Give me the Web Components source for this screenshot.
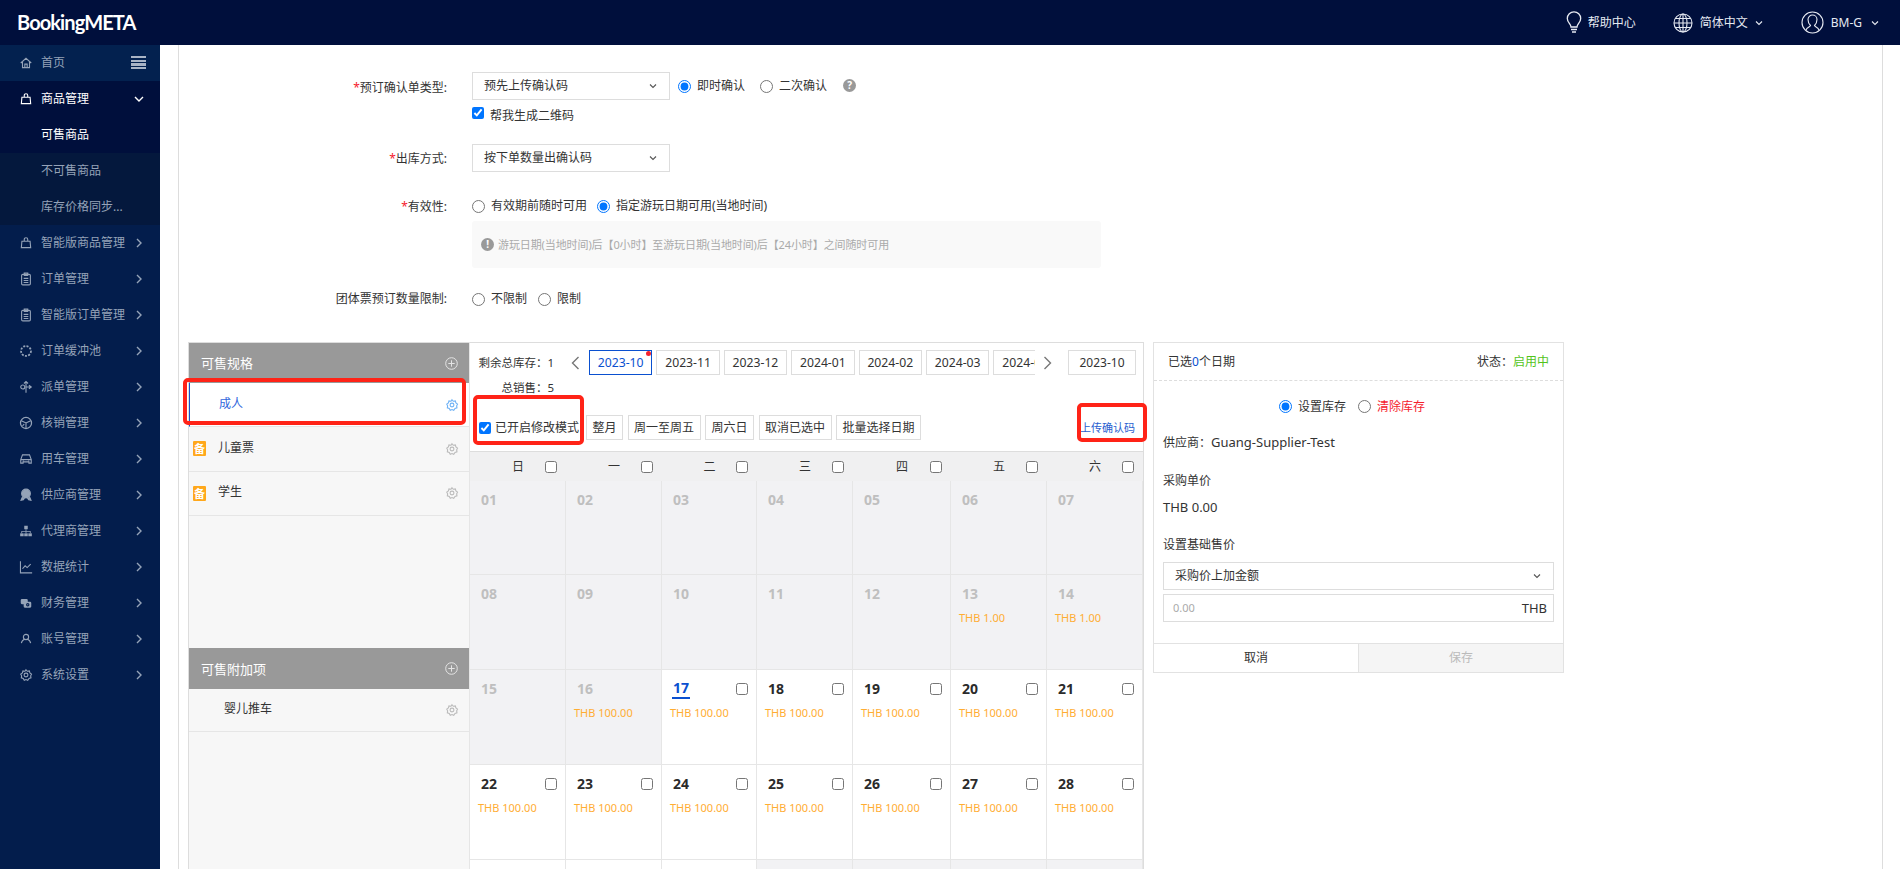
<!DOCTYPE html>
<html lang="zh-CN">
<head>
<meta charset="utf-8">
<title>BookingMETA</title>
<style>
    html, body { margin: 0; height: 100%; overflow: hidden; background: #fff; }
    body { font: 12px/18px "Noto Sans", "Noto Sans CJK SC", sans-serif; color: #333; }
    .page { display: flex; height: 824px; }
</style>
</head>
<body>
<bm-header></bm-header>
<div class="page">
    <bm-sidebar>
        <bm-menu-item icon="home" kind="home" toggle>首页</bm-menu-item>
        <bm-menu-item icon="bag" kind="open" arrow="down">商品管理</bm-menu-item>
        <bm-menu-item kind="active">可售商品</bm-menu-item>
        <bm-menu-item kind="sub">不可售商品</bm-menu-item>
        <bm-menu-item kind="sub">库存价格同步...</bm-menu-item>
        <bm-menu-item icon="bag" arrow="right">智能版商品管理</bm-menu-item>
        <bm-menu-item icon="clip" arrow="right">订单管理</bm-menu-item>
        <bm-menu-item icon="clip" arrow="right">智能版订单管理</bm-menu-item>
        <bm-menu-item icon="pool" arrow="right">订单缓冲池</bm-menu-item>
        <bm-menu-item icon="dispatch" arrow="right">派单管理</bm-menu-item>
        <bm-menu-item icon="verify" arrow="right">核销管理</bm-menu-item>
        <bm-menu-item icon="car" arrow="right">用车管理</bm-menu-item>
        <bm-menu-item icon="award" arrow="right">供应商管理</bm-menu-item>
        <bm-menu-item icon="net" arrow="right">代理商管理</bm-menu-item>
        <bm-menu-item icon="chart" arrow="right">数据统计</bm-menu-item>
        <bm-menu-item icon="money" arrow="right">财务管理</bm-menu-item>
        <bm-menu-item icon="people" arrow="right">账号管理</bm-menu-item>
        <bm-menu-item icon="cog" arrow="right">系统设置</bm-menu-item>
    </bm-sidebar>
    <bm-main>
        <bm-form-row label="预订确认单类型" required label-top="7" bottom="19">
            <bm-inline gap="8">
                <bm-select width="198">预先上传确认码</bm-select>
                <bm-radio checked>即时确认</bm-radio>
                <bm-radio style="margin-left:7px">二次确认</bm-radio>
                <bm-dot-icon glyph="?" style="margin-left:8px;margin-top:-2px"></bm-dot-icon>
            </bm-inline>
            <bm-check style="margin-top:7px" checked>帮我生成二维码</bm-check>
        </bm-form-row>
        <bm-form-row label="出库方式" required label-top="6" bottom="23">
            <bm-select width="198">按下单数量出确认码</bm-select>
        </bm-form-row>
        <bm-form-row label="有效性" required label-top="3" bottom="20">
            <bm-inline gap="10" height="22">
                <bm-radio>有效期前随时可用</bm-radio>
                <bm-radio checked>指定游玩日期可用(当地时间)</bm-radio>
            </bm-inline>
            <bm-note>游玩日期(当地时间)后【0小时】至游玩日期(当地时间)后【24小时】之间随时可用</bm-note>
        </bm-form-row>
        <bm-form-row label="团体票预订数量限制" bottom="32">
            <bm-inline gap="11" height="22">
                <bm-radio>不限制</bm-radio>
                <bm-radio>限制</bm-radio>
            </bm-inline>
        </bm-form-row>
        <bm-workspace>
            <bm-spec-panel></bm-spec-panel>
            <bm-calendar></bm-calendar>
            <bm-side-form></bm-side-form>
            <bm-mark left="-5" top="36" width="283" height="47"></bm-mark>
            <bm-mark left="285" top="53" width="111" height="50"></bm-mark>
            <bm-mark left="889" top="61" width="70" height="39"></bm-mark>
        </bm-workspace>
    </bm-main>
</div>

<script>
const ICONS = {
    home: '<path d="M3 12 12 4l9 8M6 10v10h12V10M10 20v-6h4v6"/>',
    bag: '<path d="M5 9h14l1 11H4zM9 9V6a3 3 0 0 1 6 0v3"/>',
    clip: '<rect x="4.5" y="4" width="15" height="18" rx="2"/><path d="M9 2h6v4H9zM8 11h8M8 14.5h8M8 18h8"/>',
    pool: '<circle cx="12" cy="12" r="8.5" stroke-width="3" stroke-dasharray="3.5 2.2"/>',
    dispatch: '<path d="M12 22V3M8.5 6 12 2.5 15.5 6M17 9l4 3-4 3M12 12h8"/><circle cx="6.5" cy="12" r="3.5"/>',
    verify: '<circle cx="12" cy="12" r="9.5" stroke-width="2.2"/><path d="M4 8l8 4 8-4M12 12v9M9 14l-3 3"/>',
    car: '<path d="M3 13 6 5h12l3 8v6h-4v-2H7v2H3zM3.5 13h17"/><path d="M6.5 15.5h2M15.5 15.5h2"/>',
    award: '<circle cx="12" cy="9.5" r="7.5" fill="currentColor"/><path d="M6 15 3.5 21l4-1 2-3M18 15l2.500 6-4-1-2-3" fill="currentColor"/>',
    net: '<g fill="currentColor" stroke="none"><rect x="9" y="3" width="6" height="6"/><rect x="2" y="16" width="6" height="5"/><rect x="9" y="16" width="6" height="5"/><rect x="16" y="16" width="6" height="5"/><path d="M11.300 9h1.400v3H20v4h-1.400v-2.600h-5.900V16h-1.400v-2.600H5.400V16H4v-4h7.300z"/></g>',
    chart: '<path d="M2.500 2v20h20M6 15l4.500-5 3.500 3 6-6"/>',
    money: '<g fill="currentColor" stroke="none"><rect x="3" y="5" width="12" height="9" rx="2"/><rect x="8" y="10" width="13" height="10" rx="2"/></g><circle cx="15" cy="15" r="2" stroke="#031d4c"/>',
    people: '<circle cx="12" cy="8.500" r="4.500"/><path d="M4 19c1-5 4-6 6-6.500M20 19c-1-5-4-6-6-6.500"/>',
    cog: '<path d="M12 3l2.200 2.600 3.500-.500 1 3.300 2.800 2.100L20 13.500l.5 3.400-3.300 1L15 21l-3-1.300L9 21l-1.700-3.100-3.300-1 .5-3.400-1.500-3 2.800-2.100 1-3.300 3.500.5z"/><circle cx="12" cy="12" r="3.300"/>'
};

function svgIcon(name, size) {
    return `<svg width="${size}" height="${size}" viewBox="0 0 24 24" fill="none" stroke="currentColor" stroke-width="1.900">${ICONS[name]}</svg>`;
}

const CHEVRON_DOWN = '<svg width="8" height="6" viewBox="0 0 8 6" fill="none" stroke="currentColor" stroke-width="1.100"><path d="M1 1.500 4 4.500 7 1.500"/></svg>';

class BmElement extends HTMLElement {
    constructor() {
        super();
        this.attachShadow({mode: 'open'});
    }

    connectedCallback() {
        this.shadowRoot.innerHTML = this.render();
    }
}

class BmHeader extends BmElement {
    render() {
        return `
            <style>
            :host { display: flex; align-items: center; height: 45px; background: #000f3c; color: #e6eaf2; font-size: 12px; }
            .logo { margin-left: 17px; font: 700 20px/45px Lato, sans-serif; color: #fff; letter-spacing: -0.9px; flex: 1; }
            .item { display: flex; align-items: center; }
            .item span { line-height: 18px; }
            .chev { margin-left: 7px; display: flex; }
            svg { display: block; }
            </style>
            <div class="logo">BookingMETA</div>
            <div class="item" style="margin-right:37px">
                <svg width="16" height="23" viewBox="0 0 16 23" fill="none" stroke="currentColor" stroke-width="1.300" style="margin-right:6px"><path d="M5 16c0-3-3.700-4.500-3.700-8.500a6.700 6.700 0 0 1 13.400 0C14.700 11.500 11 13 11 16zM5 18.500h6M6 21h4"/></svg>
                <span>帮助中心</span>
            </div>
            <div class="item" style="margin-right:38px">
                <svg width="20" height="20" viewBox="0 0 20 20" fill="none" stroke="currentColor" stroke-width="1.100" style="margin-right:7px"><circle cx="10" cy="10" r="9"/><ellipse cx="10" cy="10" rx="4" ry="9"/><path d="M10 1v18M1 10h18M2.300 5.500h15.400M2.300 14.500h15.400"/></svg>
                <span>简体中文</span><span class="chev">${CHEVRON_DOWN}</span>
            </div>
            <div class="item" style="margin-right:21px">
                <svg width="23" height="23" viewBox="0 0 23 23" fill="none" stroke="currentColor" stroke-width="1.100" style="margin-right:7px"><circle cx="11.500" cy="11.500" r="10.500"/><path d="M5 19c1-3 4-3 4.500-4.500C7.500 12.500 7 10 7 8.500a4.500 4.500 0 0 1 9 0c0 1.500-.5 4-2.500 6C14 16 17 16 18 19"/></svg>
                <span>BM-G</span><span class="chev" style="margin-left:9px">${CHEVRON_DOWN}</span>
            </div>
            `;
    }
}

class BmSidebar extends BmElement {
    render() {
        return `
            <style>
            :host { display: block; width: 160px; flex: none; background: #031d4c; }
            </style>
            <slot></slot>
            `;
    }
}

class BmMenuItem extends BmElement {
    render() {
        const icon = this.getAttribute('icon');
        const arrow = this.getAttribute('arrow');
        const arrowSvg = arrow === 'down'
            ? '<path d="M1 3l4 4 4-4"/>'
            : '<path d="M3 1l4 4-4 4"/>';
        return `
            <style>
            :host { display: flex; align-items: center; height: 36px; color: #95a3b8; font-size: 12px; box-sizing: border-box; }
            :host([kind="home"]) { background: #03214f; }
            :host([kind="open"]), :host([kind="active"]) { background: #000f3c; color: #fff; }
            :host([kind="sub"]) { background: #04183d; }
            .icon { width: 41px; display: flex; padding-left: 19px; box-sizing: border-box; flex: none; }
            .label { flex: 1; white-space: nowrap; }
            .arrow { width: 10px; margin-right: 16px; display: flex; flex: none; }
            .toggle { margin-right: 14px; width: 15px; height: 13px; flex: none; background: repeating-linear-gradient(#a9b4c5 0 2.500px, transparent 2.500px 3.500px); margin-top: -1px; }
            svg { display: block; }
            </style>
            <span class="icon">${icon ? svgIcon(icon, 14) : ''}</span>
            <span class="label"><slot></slot></span>
            ${arrow ? `<span class="arrow"><svg width="10" height="10" viewBox="0 0 10 10" fill="none" stroke="currentColor" stroke-width="1.400">${arrowSvg}</svg></span>` : ''}
            ${this.hasAttribute('toggle') ? '<span class="toggle"></span>' : ''}
            `;
    }
}

class BmMain extends BmElement {
    render() {
        return `
            <style>
            :host { display: block; flex: 1; margin: 0 17px 0 18px; border-left: 1px solid #ddd; border-right: 1px solid #ddd; padding: 27px 0 0 9px; font-size: 12px; overflow: hidden; }
            </style>
            <slot></slot>
            `;
    }
}

class BmFormRow extends BmElement {
    render() {
        const star = this.hasAttribute('required') ? '<span class="star">*</span>' : '';
        return `
            <style>
            :host { display: flex; margin-bottom: ${this.getAttribute('bottom') || 0}px; }
            .label { width: 259px; margin-right: 25px; text-align: right; padding-top: ${this.getAttribute('label-top') || 2}px; line-height: 18px; flex: none; box-sizing: border-box; white-space: nowrap; }
            .star { color: #f5222d; }
            .body { flex: 1; }
            </style>
            <div class="label">${star}${this.getAttribute('label')}:</div>
            <div class="body"><slot></slot></div>
            `;
    }
}

class BmInline extends BmElement {
    render() {
        const h = this.getAttribute('height');
        return `
            <style>
            :host { display: flex; align-items: center; gap: ${this.getAttribute('gap') || 0}px; ${h ? 'height:' + h + 'px;' : ''} }
            </style>
            <slot></slot>
            `;
    }
}

class BmSelect extends BmElement {
    render() {
        const w = this.getAttribute('width');
        return `
            <style>
            :host { display: flex; align-items: center; justify-content: space-between; height: 28px; box-sizing: border-box; border: 1px solid #ddd; background: #fff; padding: 0 12px 0 11px; flex: none; ${w ? 'width:' + w + 'px;' : ''} }
            svg { color: #555; display: block; }
            </style>
            <span><slot></slot></span>
            ${CHEVRON_DOWN}
            `;
    }
}

class BmRadio extends BmElement {
    render() {
        return `
            <style>
            :host { display: inline-flex; align-items: center; gap: 6px; line-height: 18px; white-space: nowrap; }
            input { margin: 0; width: 13px; height: 13px; }
            </style>
            <input type="radio" ${this.hasAttribute('checked') ? 'checked' : ''}>
            <span><slot></slot></span>
            `;
    }
}

class BmCheck extends BmElement {
    render() {
        return `
            <style>
            :host { display: flex; align-items: center; gap: 6px; line-height: 18px; white-space: nowrap; }
            input { margin: -6px 0 0 0; width: 12px; height: 12px; }
            </style>
            <input type="checkbox" ${this.hasAttribute('checked') ? 'checked' : ''}>
            <span><slot></slot></span>
            `;
    }
}

class BmDotIcon extends BmElement {
    render() {
        return `
            <style>
            :host { display: inline-flex; width: 13px; height: 13px; border-radius: 50%; background: #999; color: #fff; font: 700 10px/13px "Noto Sans", sans-serif; justify-content: center; flex: none; }
            </style>
            ${this.getAttribute('glyph')}
            `;
    }
}

class BmNote extends BmElement {
    render() {
        return `
            <style>
            :host { display: flex; align-items: center; gap: 4px; width: 629px; height: 47px; margin-top: 4px; padding-left: 9px; box-sizing: border-box; background: #f9f9f9; border-radius: 3px; color: #aaa; font-size: 11px; letter-spacing: -0.1px; white-space: nowrap; }
            </style>
            <bm-dot-icon glyph="!"></bm-dot-icon>
            <span><slot></slot></span>
            `;
    }
}

class BmWorkspace extends BmElement {
    render() {
        return `
            <style>
            :host { display: flex; align-items: flex-start; position: relative; height: 600px; font-size: 12px; }
            </style>
            <slot></slot>
            `;
    }
}

class BmMark extends BmElement {
    render() {
        const a = (n) => this.getAttribute(n) + 'px';
        return `
            <style>
            :host { position: absolute; left: ${a('left')}; top: ${a('top')}; width: ${a('width')}; height: ${a('height')}; box-sizing: border-box; border: 4px solid #ff2317; border-radius: 5px; pointer-events: none; }
            </style>
            `;
    }
}

class BmSpecPanel extends BmElement {
    render() {
        const gear = (c) => `<span class="gear" style="color:${c}">${svgIcon('cog', 14)}</span>`;
        const plus = `<svg width="13" height="13" viewBox="0 0 13 13" fill="none" stroke="#e4e4e4" stroke-width="1"><circle cx="6.500" cy="6.500" r="5.800"/><path d="M6.500 3.300v6.400M3.300 6.500h6.400"/></svg>`;
        return `
            <style>
            :host { display: block; width: 281px; height: 540px; box-sizing: border-box; border-left: 1px solid #ddd; border-top: 1px solid #ddd; background: #f7f7f7; flex: none; }
            .head { display: flex; align-items: center; justify-content: space-between; height: 40px; padding: 0 11px 0 12px; background: #999; color: #fff; font-size: 13px; }
            .list { height: 265px; }
            .row { display: flex; align-items: center; height: 44.500px; border-bottom: 1px solid #e6e6e6; box-sizing: border-box; padding-right: 10px; }
            .row.sel { height: 44px; background: #fff; color: #2f66dc; border-left: 1px solid #1a50c8; }
            .name { flex: 1; padding-bottom: 2px; }
            .sel .name { padding-left: 29px; }
            .tag { width: 13px; height: 15px; margin: 0 12px 0 4px; background: #ffa81c; color: #fff; font: 700 11px/15px "Noto Sans CJK SC", sans-serif; text-align: center; border-radius: 1px; flex: none; }
            .gear { display: flex; }
            .extra .name { padding-left: 35px; }
            svg { display: block; }
            </style>
            <div class="head"><span>可售规格</span>${plus}</div>
            <div class="list">
                <div class="row sel"><span class="name">成人</span>${gear('#6fb2f5')}</div>
                <div class="row"><span class="tag">备</span><span class="name">儿童票</span>${gear('#bbb')}</div>
                <div class="row"><span class="tag">备</span><span class="name">学生</span>${gear('#bbb')}</div>
            </div>
            <div class="head" style="height:41px"><span>可售附加项</span>${plus}</div>
            <div class="row extra" style="height:43px"><span class="name">婴儿推车</span>${gear('#bbb')}</div>
            `;
    }
}

class BmDay extends BmElement {
    render() {
        const state = this.getAttribute('state') || 'off';
        const price = this.getAttribute('price');
        const num = this.getAttribute('num');
        return `
            <style>
            :host { display: block; box-sizing: border-box; padding: 9px 0 0 8px; border-right: 1px solid #e6e6e6; border-bottom: 1px solid #e6e6e6; background: ${state === 'off' ? '#f2f2f4' : '#fff'}; }
            .num { display: inline-block; margin-left: 2px; font-weight: 700; font-size: 14px; line-height: 18px; padding: 0 1px; color: ${state === 'off' ? '#bfbfbf' : '#2b2b2b'}; }
            :host([state="today"]) .num { color: #0a50d0; border-bottom: 2px solid #0a50d0; }
            .top { display: flex; justify-content: space-between; align-items: center; height: 19px; padding-right: 8px; }
            input { margin: 0; width: 12px; height: 12px; }
            .price { margin-top: 7px; color: #ffad33; font-size: 11px; line-height: 16px; white-space: nowrap; }
            </style>
            ${num ? `<div class="top">
                <span class="num">${num}</span>
                ${state === 'off' ? '' : '<input type="checkbox">'}
            </div>` : ''}
            ${price ? `<div class="price">THB ${price}</div>` : ''}
            `;
    }
}

class BmCalendar extends BmElement {
    render() {
        const months = ['2023-10', '2023-11', '2023-12', '2024-01', '2024-02', '2024-03', '2024-04'];
        const weeks = ['日', '一', '二', '三', '四', '五', '六'];
        const days = [];
        for (let d = 1; d <= 35; d++) {
            // the row from the 29th starts only 10px above the window edge, nothing of it shows but its cells
            const num = d < 29 ? String(d).padStart(2, '0') : '';
            let state = 'off', price = '';
            if (d === 13 || d === 14) price = '1.00';
            if (d === 16) price = '100.00';
            if (d >= 17 && d <= 31) state = d === 17 ? 'today' : 'on';
            if (d >= 17 && d < 29) price = '100.00';
            days.push(`<bm-day ${num ? `num="${num}"` : ''} state="${state}" ${price ? `price="${price}"` : ''}></bm-day>`);
        }
        const chevron = (d) => `<svg width="9" height="14" viewBox="0 0 9 14" fill="none" stroke="#777" stroke-width="1.400"><path d="${d}"/></svg>`;
        return `
            <style>
            :host { display: block; width: 675px; height: 640px; box-sizing: border-box; border-top: 1px solid #ddd; border-left: 1px solid #e6e6e6; border-right: 1px solid #ddd; flex: none; margin-right: 9px; overflow: hidden; }
            .tools { height: 109px; padding-top: 7px; box-sizing: border-box; border-bottom: 1px solid #ddd; }
            .row { display: flex; align-items: center; height: 25px; }
            .stat { width: 84px; text-align: right; white-space: nowrap; flex: none; font-size: 11.500px; }
            .prev { margin-left: 17px; width: 9px; margin-right: 9px; display: flex; }
            .strip { display: flex; gap: 4px; width: 446px; overflow: hidden; flex: none; height: 25px; }
            .m, .btn, .pick { box-sizing: border-box; border: 1px solid #ddd; height: 25px; line-height: 23px; background: #fff; flex: none; white-space: nowrap; text-align: center; }
            .m { width: 63.400px; position: relative; font-size: 12.200px; }
            .m:last-child { text-align: left; padding-left: 8px; }
            .m.cur { border-color: #0a50d0; color: #0a50d0; }
            .m.cur::after { content: ""; position: absolute; right: 0; top: 0; width: 5px; height: 5px; border-radius: 50%; background: #f5222d; }
            .next { margin-left: 8px; width: 9px; display: flex; }
            .pick { margin-left: 16px; width: 68px; font-size: 12px; }
            .edit { display: flex; align-items: center; gap: 4px; width: 116px; padding-left: 9px; box-sizing: border-box; flex: none; white-space: nowrap; }
            .edit input { margin: 0; width: 12px; height: 12px; }
            .btn { padding: 0 5.500px; margin-right: 4.500px; }
            .upload { margin-left: auto; margin-right: 8px; color: #2a5fd0; font-size: 11px; white-space: nowrap; }
            .week, .days { display: grid; grid-template-columns: 96px 96px 95px 96px 98px 96px 96px; }
            .week { height: 29px; background: #f0f0f1; }
            .wd { display: grid; grid-template-columns: 1fr auto 1fr; align-items: center; padding: 0 9px; }
            .wd input { grid-column: 3; justify-self: end; margin: 0; width: 12px; height: 12px; }
            .wd span { grid-column: 2; }
            .days { grid-template-rows: 94px repeat(4, 95px); }
            svg { display: block; }
            </style>
            <div class="tools">
                <div class="row">
                    <span class="stat">剩余总库存：1</span>
                    <span class="prev">${chevron('M7.500 1 1.500 7l6 6')}</span>
                    <div class="strip">
                        ${months.map((m, i) => `<span class="m${i === 0 ? ' cur' : ''}">${m}</span>`).join('')}
                    </div>
                    <span class="next">${chevron('M1.500 1l6 6-6 6')}</span>
                    <span class="pick">2023-10</span>
                </div>
                <div class="row"><span class="stat">总销售：5</span></div>
                <div class="row" style="margin-top:15px">
                    <label class="edit"><input type="checkbox" checked>已开启修改模式</label>
                    <span class="btn">整月</span>
                    <span class="btn">周一至周五</span>
                    <span class="btn">周六日</span>
                    <span class="btn">取消已选中</span>
                    <span class="btn">批量选择日期</span>
                    <span class="upload">上传确认码</span>
                </div>
            </div>
            <div class="week">
                ${weeks.map((w) => `<div class="wd"><span>${w}</span><input type="checkbox"></div>`).join('')}
            </div>
            <div class="days">${days.join('')}</div>
            `;
    }
}

class BmSideForm extends BmElement {
    render() {
        return `
            <style>
            :host { display: block; width: 411px; height: 331px; box-sizing: border-box; border: 1px solid #e2e2e2; flex: none; position: relative; }
            .head { display: flex; justify-content: space-between; align-items: center; height: 38px; padding: 0 14px; border-bottom: 1px dashed #ddd; box-sizing: border-box; }
            .head b { font-weight: 400; color: #0a50d0; }
            .on { color: #52c41a; }
            .body { padding: 0 9px; }
            .radios { display: flex; justify-content: center; align-items: center; gap: 12px; height: 51px; padding-right: 13px; }
            .t { line-height: 18px; }
            .lat { font-size: 13px; }
            bm-select { width: 100%; margin-top: 8px; box-sizing: border-box; }
            .amt { display: flex; justify-content: space-between; align-items: center; height: 28px; margin-top: 4px; padding: 0 6px 0 9px; box-sizing: border-box; border: 1px solid #ddd; }
            .amt i { font-style: normal; color: #aaa; font-size: 11px; }
            .foot { display: flex; position: absolute; left: 0; right: 0; bottom: 0; height: 29px; border-top: 1px solid #e2e2e2; box-sizing: border-box; }
            .foot span { flex: 1; text-align: center; line-height: 27px; }
            .foot .save { background: #f5f5f5; color: #bbb; border-left: 1px solid #e2e2e2; }
            </style>
            <div class="head"><span>已选<b>0</b>个日期</span><span>状态：<span class="on">启用中</span></span></div>
            <div class="body">
                <div class="radios">
                    <bm-radio checked>设置库存</bm-radio>
                    <bm-radio><span style="color:#f5222d">清除库存</span></bm-radio>
                </div>
                <div class="t" style="margin-top:1px">供应商：<span class="lat">Guang-Supplier-Test</span></div>
                <div class="t" style="margin-top:20px">采购单价</div>
                <div class="t lat" style="margin-top:8px">THB 0.00</div>
                <div class="t" style="margin-top:20px">设置基础售价</div>
                <bm-select>采购价上加金额</bm-select>
                <div class="amt"><i>0.00</i><span class="lat">THB</span></div>
            </div>
            <div class="foot"><span>取消</span><span class="save">保存</span></div>
            `;
    }
}

customElements.define('bm-header', BmHeader);
customElements.define('bm-sidebar', BmSidebar);
customElements.define('bm-menu-item', BmMenuItem);
customElements.define('bm-main', BmMain);
customElements.define('bm-form-row', BmFormRow);
customElements.define('bm-inline', BmInline);
customElements.define('bm-select', BmSelect);
customElements.define('bm-radio', BmRadio);
customElements.define('bm-check', BmCheck);
customElements.define('bm-dot-icon', BmDotIcon);
customElements.define('bm-note', BmNote);
customElements.define('bm-workspace', BmWorkspace);
customElements.define('bm-mark', BmMark);
customElements.define('bm-spec-panel', BmSpecPanel);
customElements.define('bm-day', BmDay);
customElements.define('bm-calendar', BmCalendar);
customElements.define('bm-side-form', BmSideForm);
</script>
</body>
</html>
